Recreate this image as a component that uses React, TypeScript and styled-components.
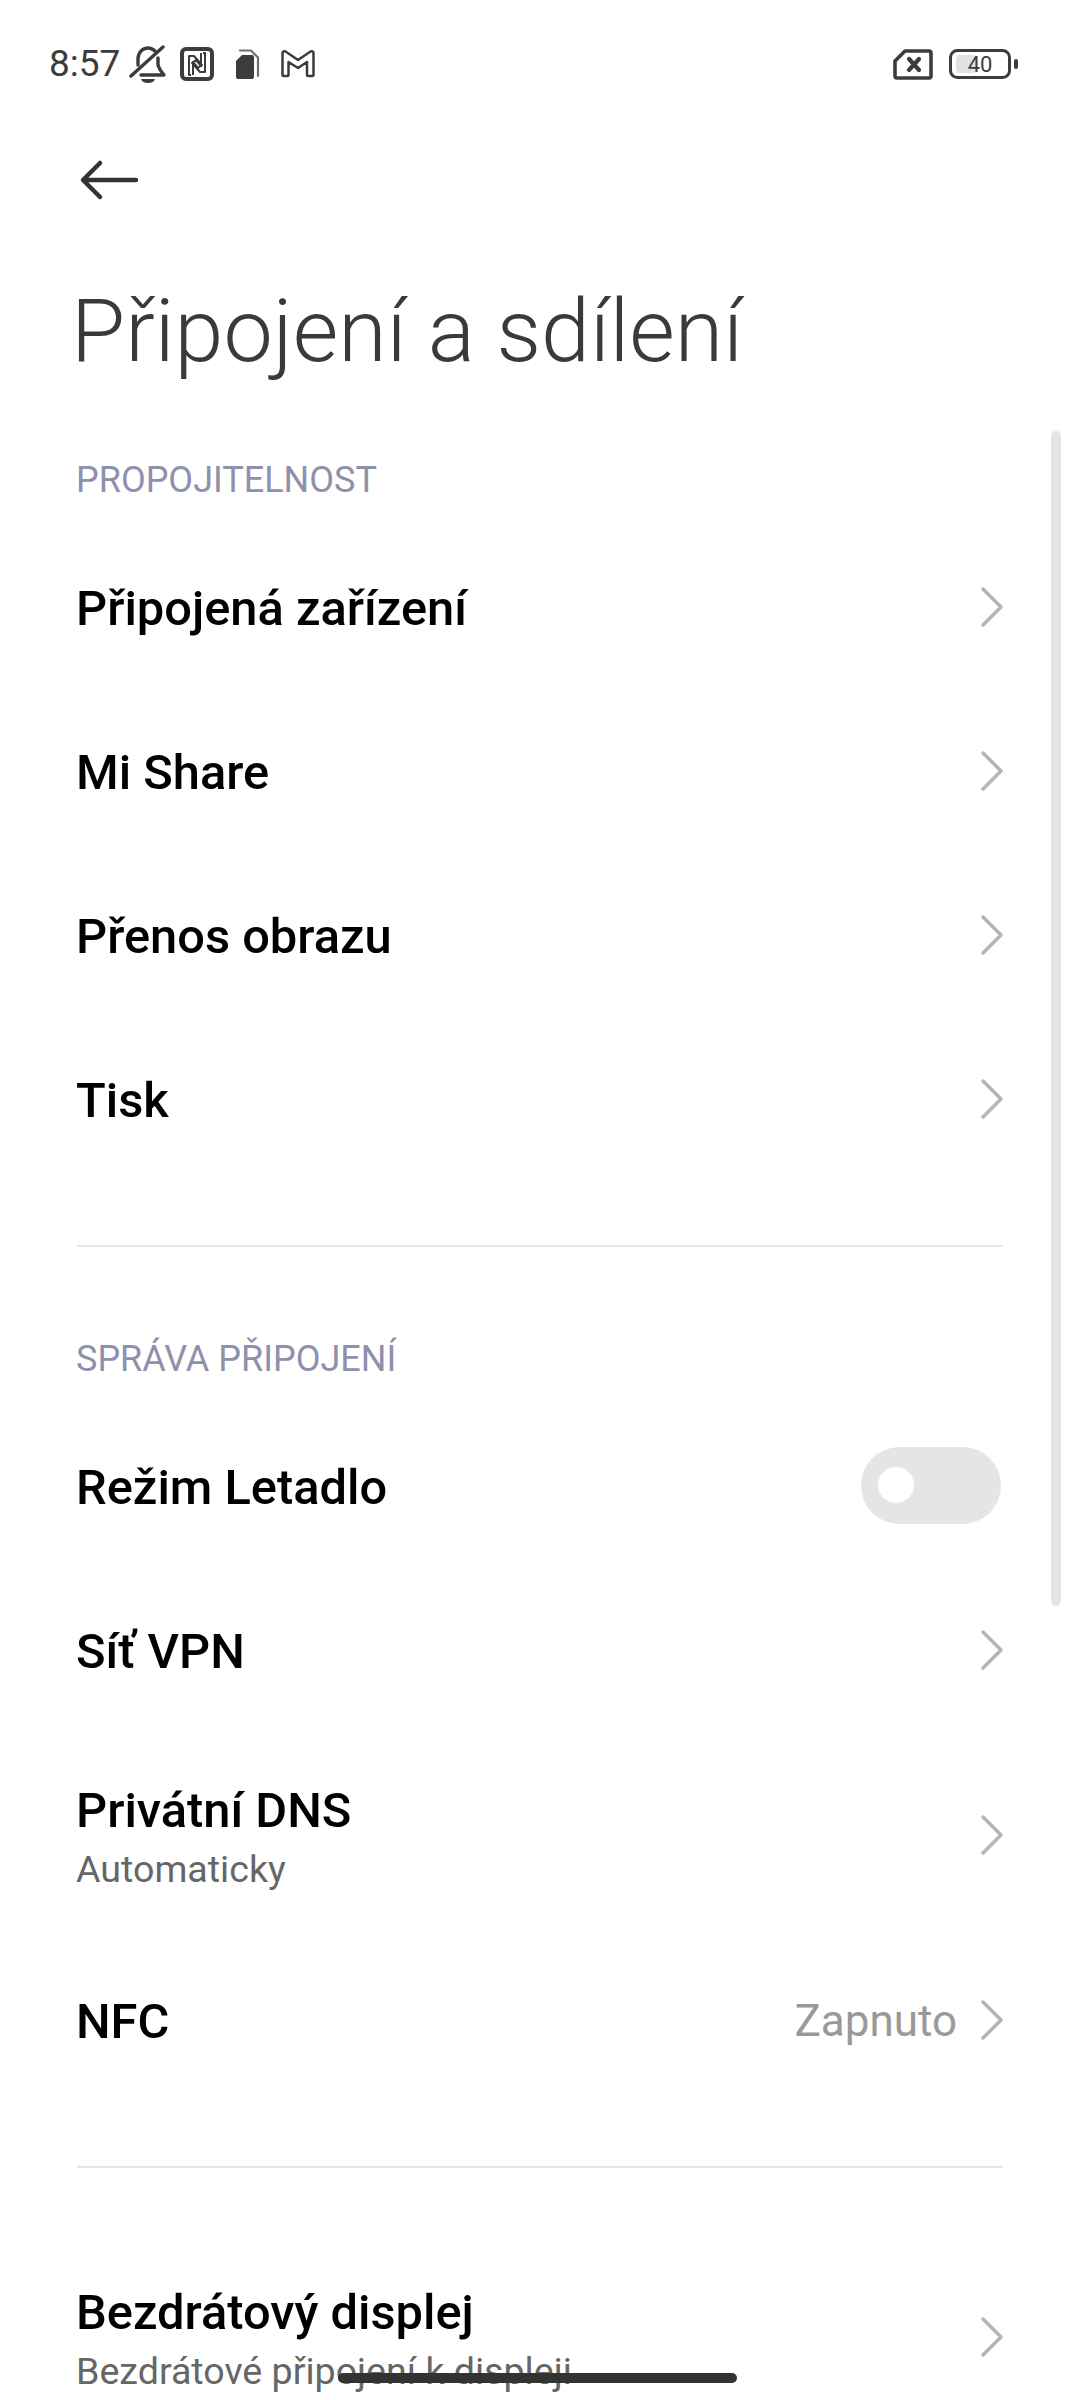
import React from "react";
import styled, { createGlobalStyle } from "styled-components";

const Global = createGlobalStyle`
  html, body { margin: 0; padding: 0; background: #fff; }
  body { font-family: Roboto, "Noto Sans", sans-serif; }
`;

const Page = styled.div`
  position: relative;
  width: 1080px;
  height: 2400px;
  overflow: hidden;
  background: #fff;
`;

const StatusBar = styled.div`
  height: 128px;
  display: flex;
  align-items: center;
  justify-content: space-between;
  padding: 0 62px 0 49px;
  box-sizing: border-box;
`;

const StatusGroup = styled.div`
  display: flex;
  align-items: center;
`;

const Clock = styled.span`
  font-size: 37px;
  line-height: 40px;
  color: #3c3c3c;
  width: 80px;
`;

const ToolBar = styled.div`
  height: 104px;
  display: flex;
  align-items: center;
  padding-left: 79px;
`;

const Title = styled.h1`
  margin: 0;
  height: 201px;
  box-sizing: border-box;
  padding: 0 0 5px 71px;
  display: flex;
  align-items: center;
  font-size: 88px;
  font-weight: 300;
  color: #3a3a3a;
`;

const SectionHeader = styled.div`
  height: 92px;
  display: flex;
  align-items: center;
  padding: 1px 0 0 76px;
  box-sizing: border-box;
  font-size: 36px;
  color: #8e90ac;
`;

const Row = styled.div<{ $tall?: boolean }>`
  height: ${(p) => (p.$tall ? 206 : 164)}px;
  display: flex;
  align-items: center;
  justify-content: space-between;
  padding: 0 76px 0 76px;
`;

const RowText = styled.div<{ $tall?: boolean }>`
  display: flex;
  flex-direction: column;
  padding-top: ${(p) => (p.$tall ? 7 : 3)}px;
`;

const RowTitle = styled.div`
  font-size: 48.8px;
  line-height: 60px;
  font-weight: 500;
  color: #000;
`;

const RowSub = styled.div`
  font-size: 37.6px;
  line-height: 56px;
  color: #666;
`;

const RowEnd = styled.div`
  display: flex;
  align-items: center;
  gap: 23px;
`;

const RowValue = styled.span`
  font-size: 44px;
  color: #999;
  padding-top: 2px;
`;

const Divider = styled.div<{ $after: number }>`
  height: 2px;
  margin: 64px 77px ${(p) => p.$after}px;
  background: #e6e6e6;
`;

const Toggle = styled.div`
  width: 140px;
  height: 77px;
  margin: 0 3px 2px 0;
  border-radius: 39px;
  background: #e5e5e5;
  display: flex;
  align-items: center;
  padding-left: 17px;
  box-sizing: border-box;
`;

const Knob = styled.div`
  width: 36px;
  height: 36px;
  border-radius: 50%;
  background: #fff;
`;

const Scrollbar = styled.div`
  position: absolute;
  left: 1051px;
  top: 431px;
  width: 10px;
  height: 1175px;
  border-radius: 5px;
  background: #e4e4e4;
`;

const HomeBar = styled.div`
  position: absolute;
  left: 338px;
  top: 2373px;
  width: 399px;
  height: 10px;
  border-radius: 5px;
  background: #333;
`;

const Chevron = () => (
  <svg width="24" height="42" viewBox="0 0 24 42" fill="none">
    <path d="M3 3l18 18L3 39" stroke="#b4b4b4" strokeWidth="3.5" strokeLinecap="round" strokeLinejoin="round" />
  </svg>
);

const BellOff = () => (
  <svg width="38" height="38" viewBox="0 0 38 38" fill="none" stroke="#3c3c3c" strokeWidth="3.4" strokeLinecap="round" strokeLinejoin="round" style={{ marginRight: 13 }}>
    <path d="M34 2L2 31" />
    <path d="M26 6c-2-2-4-3-7-3-6 0-10 5-10 11v6" />
    <path d="M29 13v6c0 4 3 7 6 11H12" />
    <path d="M12 34h14c-1 3-4 4-7 4s-6-1-7-4z" fill="#3c3c3c" stroke="none" />
  </svg>
);

const Nfc = () => (
  <svg width="34" height="34" viewBox="0 0 34 34" fill="none" stroke="#3c3c3c" strokeLinejoin="round" style={{ marginRight: 21 }}>
    <rect x="2" y="2" width="30" height="30" rx="4" strokeWidth="4" />
    <path d="M11 28H9V9h5l8 9-4 3-5-6v13" strokeWidth="2" />
    <path d="M23 6h2v19h-5l-8-9 4-3 5 6V6" strokeWidth="2" />
  </svg>
);

const Sim = () => (
  <svg width="25" height="30" viewBox="0 0 25 30" fill="none" style={{ marginRight: 21 }}>
    <path d="M7 6h10a2 2 0 0 1 2 2v20a2 2 0 0 1-2 2H3a2 2 0 0 1-2-2V12z" fill="#3c3c3c" />
    <path d="M5 1.500h11l7 7V27" stroke="#6e6e6e" strokeWidth="2.200" strokeLinecap="round" strokeLinejoin="round" />
  </svg>
);

const Mail = () => (
  <svg width="34" height="28" viewBox="0 0 34 28" fill="none" stroke="#3c3c3c" strokeWidth="2.500" strokeLinejoin="round">
    <path d="M1.500 3a2 2 0 0 1 3-1.500L17 10 29.500 1.500a2 2 0 0 1 3 1.500v22a1 1 0 0 1-1 1h-4.500a1 1 0 0 1-1-1V12L17 18 7.500 12v13a1 1 0 0 1-1 1H2.500a1 1 0 0 1-1-1z" />
  </svg>
);

const SimOff = () => (
  <svg width="40" height="31" viewBox="0 0 40 31" fill="none" style={{ marginRight: 16 }}>
    <path d="M12 2h24a2 2 0 0 1 2 2v23a2 2 0 0 1-2 2H4a2 2 0 0 1-2-2V12z" stroke="#3c3c3c" strokeWidth="3.600" strokeLinejoin="round" />
    <path d="M16 10l10 11M26 10L16 21" stroke="#3c3c3c" strokeWidth="4.200" strokeLinecap="round" />
  </svg>
);

const Battery = () => (
  <svg width="69" height="30" viewBox="0 0 69 30" fill="none">
    <rect x="7" y="6" width="20" height="18" rx="3" fill="#e2e2e2" />
    <rect x="1.500" y="1.500" width="59" height="27" rx="7" stroke="#3c3c3c" strokeWidth="3" />
    <rect x="65" y="10" width="4" height="10" rx="2" fill="#3c3c3c" />
    <text x="31" y="23" fontSize="22" textAnchor="middle" fill="#3c3c3c" fontFamily="Roboto, sans-serif">40</text>
  </svg>
);

const BackArrow = () => (
  <svg width="60" height="42" viewBox="0 0 60 42" fill="none" stroke="#333" strokeWidth="4.500" strokeLinecap="round" strokeLinejoin="round">
    <path d="M57 21H5M21 4L4 21l17 17" />
  </svg>
);

type Item = { title: string; sub?: string; value?: string; toggle?: boolean };

const SettingRow = ({ title, sub, value, toggle }: Item) => (
  <Row $tall={!!sub}>
    <RowText $tall={!!sub}>
      <RowTitle>{title}</RowTitle>
      {sub && <RowSub>{sub}</RowSub>}
    </RowText>
    {toggle ? (
      <Toggle><Knob /></Toggle>
    ) : (
      <RowEnd>
        {value && <RowValue>{value}</RowValue>}
        <Chevron />
      </RowEnd>
    )}
  </Row>
);

const first: Item[] = [
  { title: "Připojená zařízení" },
  { title: "Mi Share" },
  { title: "Přenos obrazu" },
  { title: "Tisk" },
];

const second: Item[] = [
  { title: "Režim Letadlo", toggle: true },
  { title: "Síť VPN" },
  { title: "Privátní DNS", sub: "Automaticky" },
  { title: "NFC", value: "Zapnuto" },
];

export default function App() {
  return (
    <Page>
      <Global />
      <StatusBar>
        <StatusGroup>
          <Clock>8:57</Clock>
          <BellOff />
          <Nfc />
          <Sim />
          <Mail />
        </StatusGroup>
        <StatusGroup>
          <SimOff />
          <Battery />
        </StatusGroup>
      </StatusBar>
      <ToolBar><BackArrow /></ToolBar>
      <Title>Připojení a sdílení</Title>
      <SectionHeader>PROPOJITELNOST</SectionHeader>
      {first.map((i) => <SettingRow key={i.title} {...i} />)}
      <Divider $after={65} />
      <SectionHeader>SPRÁVA PŘIPOJENÍ</SectionHeader>
      {second.map((i) => <SettingRow key={i.title} {...i} />)}
      <Divider $after={66} />
      <SettingRow title="Bezdrátový displej" sub="Bezdrátové připojení k displeji" />
      <Scrollbar />
      <HomeBar />
    </Page>
  );
}
